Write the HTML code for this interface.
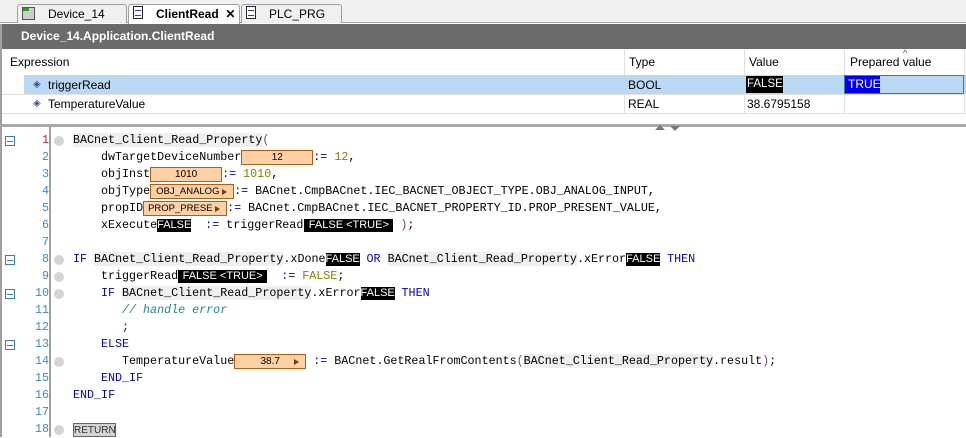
<!DOCTYPE html>
<html><head><style>
*{margin:0;padding:0;box-sizing:border-box}
body{width:966px;height:437px;overflow:hidden;background:#fff;font-family:"Liberation Sans",sans-serif;font-size:12px;position:relative}
.abs{position:absolute}
.tabbar{left:0;top:0;width:966px;height:23px;background:#f0f0f0;border-bottom:1px solid #a0a0a0}
.tab{position:absolute;top:4px;height:19px;border:1px solid #a0a0a0;border-bottom:none;border-radius:3px 3px 0 0;background:#f0f0f0;font-size:12px;line-height:18px}
.title{left:2px;top:24px;width:964px;height:25px;background:#6b6b6b;color:#fff;font-weight:bold;font-size:12px;line-height:25px;padding-left:19px}
.hdr{top:50px;height:24px;line-height:24px;font-size:12px;color:#000}
.vl{width:1px;background:#e0e0e0}
.code{font-family:"Liberation Mono",monospace;font-size:11.7px;white-space:pre;line-height:17px;height:17px}
.ln{left:20px;width:29px;text-align:right;font-family:"Liberation Mono",monospace;font-size:11.7px;color:#3b8bc7;line-height:17px}
.dot{left:54px;width:10px;height:10px;border-radius:5px;background:#d4d4d4}
.fold{left:5px;width:10px;height:10px;border:1px solid #3b7bbf}
.fold:after{content:"";position:absolute;left:1px;top:3.5px;width:6px;height:1px;background:#3b7bbf}
.k{color:#0000e0}
.n{color:#8a7f00}
.c{color:#1a8a8a;font-style:italic}
.g{background:#efefef}
.ob{display:inline-block;height:15px;vertical-align:top;margin-top:1px;background:#fdd0a6;border:1px solid #b85a10;font-family:"Liberation Sans",sans-serif;font-size:10px;line-height:14px;text-align:center;color:#000;position:relative;overflow:hidden}
.bb{display:inline-block;height:13px;vertical-align:top;margin-top:2px;background:#000;color:#fff;font-family:"Liberation Sans",sans-serif;font-size:11px;line-height:13px;text-align:center}
.ar{position:absolute;right:6px;top:3.5px;width:0;height:0;border-left:5px solid #7a3a00;border-top:3.5px solid transparent;border-bottom:3.5px solid transparent}
</style></head><body>
<div class="abs tabbar"></div>
<div class="tab" style="left:17px;width:110px;padding-left:30px">Device_14</div>
<div class="abs" style="left:22px;top:7px;width:13px;height:13px;border:1px solid #555;background:#ccc"><div style="height:3px;background:#2a9a2a;width:6px"></div></div>
<div class="tab" style="left:128px;width:112px;background:#fff;padding-left:27px;font-weight:bold;height:20px">ClientRead&nbsp;&nbsp;<span style="font-weight:bold">✕</span></div>
<div class="abs" style="left:133px;top:6px;width:10px;height:13px;border:1px solid #223;background:#fff"><div style="margin:3px 1px;height:6px;border-top:1px solid #1a3ad0;border-bottom:1px solid #1a3ad0"></div></div>
<div class="tab" style="left:241px;width:101px;padding-left:27px">PLC_PRG</div>
<div class="abs" style="left:246px;top:6px;width:10px;height:13px;border:1px solid #223;background:#fff"><div style="margin:3px 1px;height:6px;border-top:1px solid #1a3ad0;border-bottom:1px solid #1a3ad0"></div></div>
<div class="abs title">Device_14.Application.ClientRead</div>
<div class="abs" style="left:0;top:24px;width:2px;height:110px;background:#a0a0a0"></div>
<div class="abs hdr" style="left:10px">Expression</div>
<div class="abs hdr" style="left:629px">Type</div>
<div class="abs hdr" style="left:749px">Value</div>
<div class="abs hdr" style="left:850px">Prepared value</div>
<div class="abs" style="left:903px;top:48px;font-size:9px;color:#555">^</div>
<div class="abs vl" style="left:624px;top:50px;height:64px"></div>
<div class="abs vl" style="left:744px;top:50px;height:64px"></div>
<div class="abs vl" style="left:844px;top:50px;height:64px"></div>
<div class="abs vl" style="left:964px;top:50px;height:64px"></div>
<div class="abs" style="left:24px;top:75px;width:942px;height:19px;background:#bbd8f2"></div>
<div class="abs" style="left:2px;top:94px;width:964px;height:1px;background:#e0e0e0"></div>
<div class="abs" style="left:2px;top:113px;width:964px;height:1px;background:#e0e0e0"></div>
<div class="abs" style="left:33px;top:79px;color:#3a4a9a;font-size:10px">◈</div>
<div class="abs" style="left:33px;top:98px;color:#3a4a9a;font-size:10px">◈</div>
<div class="abs" style="left:48px;top:77px;line-height:16px">triggerRead</div>
<div class="abs" style="left:48px;top:96px;line-height:16px">TemperatureValue</div>
<div class="abs" style="left:628px;top:77px;line-height:16px">BOOL</div>
<div class="abs" style="left:628px;top:96px;line-height:16px">REAL</div>
<div class="abs" style="left:746px;top:76px;width:37px;height:17px;background:#000;color:#fff;line-height:17px;padding-left:1px;font-size:11.5px">FALSE</div>
<div class="abs" style="left:747px;top:96px;line-height:16px">38.6795158</div>
<div class="abs" style="left:844px;top:75px;width:120px;height:19px;border:1px solid #3a78c0"></div>
<div class="abs" style="left:845px;top:76px;width:35px;height:17px;background:#0000f0;color:#fff;line-height:17px;padding-left:3px">TRUE</div>
<div class="abs" style="left:0;top:124px;width:966px;height:3px;background:#a8a8a8"></div>
<div class="abs" style="left:655px;top:125px;width:0;height:0;border-left:5px solid transparent;border-right:5px solid transparent;border-bottom:5px solid #777"></div>
<div class="abs" style="left:670px;top:126px;width:0;height:0;border-left:5px solid transparent;border-right:5px solid transparent;border-top:5px solid #777"></div>
<div class="abs" style="left:0;top:127px;width:2px;height:310px;background:#a0a0a0"></div>
<div class="abs" style="left:49px;top:127px;width:2px;height:310px;background:#a0a0a0"></div>

<div class="abs ln" style="top:132px;color:#c02040">1</div>
<div class="abs ln" style="top:149px">2</div>
<div class="abs ln" style="top:166px">3</div>
<div class="abs ln" style="top:183px">4</div>
<div class="abs ln" style="top:200px">5</div>
<div class="abs ln" style="top:217px">6</div>
<div class="abs ln" style="top:234px">7</div>
<div class="abs ln" style="top:251px">8</div>
<div class="abs ln" style="top:268px">9</div>
<div class="abs ln" style="top:285px">10</div>
<div class="abs ln" style="top:302px">11</div>
<div class="abs ln" style="top:319px">12</div>
<div class="abs ln" style="top:336px">13</div>
<div class="abs ln" style="top:353px">14</div>
<div class="abs ln" style="top:370px">15</div>
<div class="abs ln" style="top:387px">16</div>
<div class="abs ln" style="top:404px">17</div>
<div class="abs ln" style="top:421px">18</div>

<div class="abs fold" style="top:136px"></div>
<div class="abs fold" style="top:255px"></div>
<div class="abs fold" style="top:289px"></div>
<div class="abs fold" style="top:340px"></div>
<div class="abs dot" style="top:136px"></div>
<div class="abs dot" style="top:255px"></div>
<div class="abs dot" style="top:272px"></div>
<div class="abs dot" style="top:289px"></div>
<div class="abs dot" style="top:357px"></div>
<div class="abs dot" style="top:425px"></div>

<div class="abs code" style="left:73px;top:132px"><span class="g">BACnet_Client_Read_Property</span><span style="color:#804080">(</span></div>
<div class="abs code" style="left:101px;top:149px">dwTargetDeviceNumber<span class="ob" style="width:72px">12</span><span class="k">:=</span> <span class="n">12</span>,</div>
<div class="abs code" style="left:101px;top:166px">objInst<span class="ob" style="width:72px">1010</span><span class="k">:=</span> <span class="n">1010</span>,</div>
<div class="abs code" style="left:101px;top:183px">objType<span class="ob" style="width:84px;text-align:left;padding-left:5px;font-size:9.5px">OBJ_ANALOG<i class="ar"></i></span><span class="k">:=</span> BACnet.CmpBACnet.IEC_BACNET_OBJECT_TYPE.OBJ_ANALOG_INPUT,</div>
<div class="abs code" style="left:101px;top:200px">propID<span class="ob" style="width:84px;text-align:left;padding-left:4px;font-size:9.5px">PROP_PRESE<i class="ar"></i></span><span class="k">:=</span> BACnet.CmpBACnet.IEC_BACNET_PROPERTY_ID.PROP_PRESENT_VALUE,</div>
<div class="abs code" style="left:101px;top:217px">xExecute<span class="bb" style="width:34px">FALSE</span>  <span class="k">:=</span> triggerRead<span class="bb" style="width:89px;margin-left:1px">FALSE &lt;TRUE&gt;</span> <span style="color:#804080">)</span>;</div>
<div class="abs code" style="left:73px;top:251px"><span class="k">IF</span> <span class="g">BACnet_Client_Read_Property</span>.xDone<span class="bb" style="width:34px">FALSE</span> <span class="k">OR</span> <span class="g">BACnet_Client_Read_Property</span>.xError<span class="bb" style="width:34px">FALSE</span> <span class="k">THEN</span></div>
<div class="abs code" style="left:101px;top:268px">triggerRead<span class="bb" style="width:89px">FALSE &lt;TRUE&gt;</span>  <span class="k">:=</span> <span class="n">FALSE</span>;</div>
<div class="abs code" style="left:101px;top:285px"><span class="k">IF</span> <span class="g">BACnet_Client_Read_Property</span>.xError<span class="bb" style="width:34px">FALSE</span> <span class="k">THEN</span></div>
<div class="abs code c" style="left:122px;top:302px">// handle error</div>
<div class="abs code k" style="left:122px;top:319px">;</div>
<div class="abs code k" style="left:101px;top:336px">ELSE</div>
<div class="abs code" style="left:122px;top:353px">TemperatureValue<span class="ob" style="width:72px">38.7<i class="ar"></i></span> <span class="k">:=</span> BACnet.GetRealFromContents<span style="color:#804080">(</span><span class="g">BACnet_Client_Read_Property</span>.result<span style="color:#804080">)</span>;</div>
<div class="abs code k" style="left:101px;top:370px">END_IF</div>
<div class="abs code k" style="left:73px;top:387px">END_IF</div>
<div class="abs" style="left:73px;top:423px;width:43px;height:14px;background:#d4d4d4;border:1px solid #666;font-size:10px;line-height:13px;text-align:center;color:#333">RETURN</div>
</body></html>
